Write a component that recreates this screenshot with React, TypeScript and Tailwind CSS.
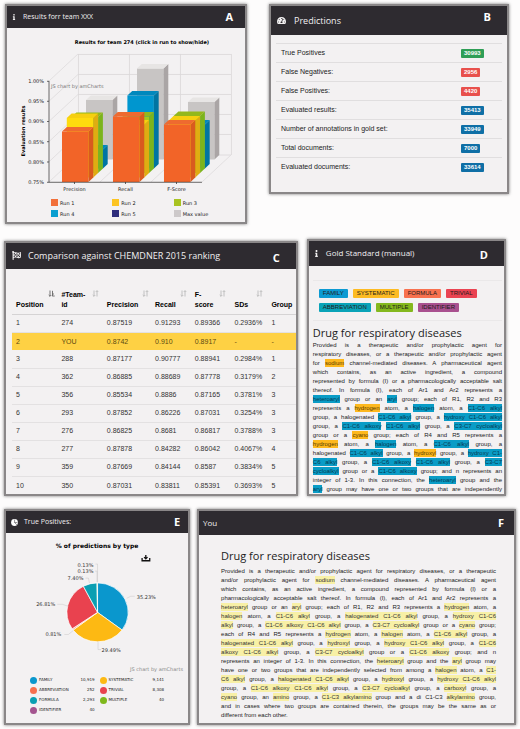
import { useState } from "react";
import type { ReactNode } from "react";
import { FaFlagCheckered, FaInfo, FaTachometerAlt } from "react-icons/fa";

interface PanelProps {
  title: string;
  letter: string;
  icon?: ReactNode;
  className: string;
  headerClass: string;
  letterClass: string;
  children: ReactNode;
}

function Panel({ title, letter, icon, className, headerClass, letterClass, children }: PanelProps) {
  return (
    <section
      className={`min-w-0 border-2 border-[#8a8788] bg-[#f3f1f2] shadow-[0_0_3px_#777] ${className}`}
    >
      <header
        className={`flex items-center bg-[#2e2b30] font-['Open_Sans',sans-serif] text-[#f1eff0] ${headerClass}`}
      >
        {icon}
        <h2 className="flex-1 whitespace-nowrap">{title}</h2>
        <span className={`text-[11px] leading-[14px] font-bold text-white ${letterClass}`}>{letter}</span>
      </header>
      {children}
    </section>
  );
}

/* ---------- A: 3D bar chart ---------- */

const RUNS = [
  { name: "Run 1", face: "#f26428", side: "#d95a1f", cap: "#ee6a30", swatch: "bg-[#f2703a]" },
  { name: "Run 2", face: "#fedb0e", side: "#dfad12", cap: "#f6cf10", swatch: "bg-[#fcc422]" },
  { name: "Run 3", face: "#a5c81c", side: "#7cb41c", cap: "#93b81c", swatch: "bg-[#a9c322]" },
  { name: "Run 4", face: "#0096cf", side: "#0075a2", cap: "#0088bd", swatch: "bg-[#0a9fd0]" },
  { name: "Run 5", face: "#2f2d7c", side: "#232160", cap: "#2a286e", swatch: "bg-[#2f2d7c]" },
  { name: "Max value", face: "#c8c5c4", side: "#aaa5a5", cap: "#e7e5e4", swatch: "bg-[#cdc9ca]" },
];

// top edge of the front face for every run, null = not drawn
const GROUPS: { label: string; x: number; tops: (number | null)[] }[] = [
  { label: "Precision", x: 62, tops: [131.5, 118, 117, 149.5, null, 100] },
  { label: "Recall", x: 113, tops: [116.5, 124.5, 116.5, 95.5, null, 68.5] },
  { label: "F-Score", x: 164, tops: [124.5, 120.5, 116, 124.5, null, 102] },
];

const DX = 4.8;
const DY = 4.5;
const BAR = 26.5;

function Bar({ x, top, depth }: { x: number; top: number; depth: number }) {
  const run = RUNS[depth];
  const left = x + DX * depth;
  const right = left + BAR;
  const base = 182 - DY * depth;
  return (
    <g>
      <path d={`M${left} ${top}H${right}V${base}H${left}Z`} fill={run.face} />
      <path d={`M${right} ${top}l${DX} ${-DY}V${base - DY}L${right} ${base}Z`} fill={run.side} />
      <path d={`M${left} ${top}l${DX} ${-DY}h${BAR}l${-DX} ${DY}Z`} fill={run.cap} />
    </g>
  );
}

function RunsChart() {
  const [hidden, setHidden] = useState<string[]>([]);
  const toggle = (name: string) =>
    setHidden(h => (h.includes(name) ? h.filter(n => n !== name) : [...h, name]));

  return (
    <div className="pt-[10px] pb-1 font-['DejaVu_Sans',sans-serif]">
      <h3 className="pl-8 text-center text-[5px] leading-[8px] font-bold text-black">
        Results for team 274 (click in run to show/hide)
      </h3>
      <svg viewBox="7 50 238 146" className="mt-1 block w-full" role="img" aria-label="Evaluation results">
        <path
          d="M78 54.5H231M78 74.5H231M78 94.5H231M78 114.5H231M78 134.5H231M78 155H231M78.5 54V155M129.5 54V155M180.5 54V155M231.5 54V155"
          stroke="#dad8d9"
          strokeWidth="0.8"
        />
        <path
          d="M49 81L78 54M49 101.2L78 74.5M49 121.4L78 94.5M49 141.6L78 114.5M49 161.8L78 134.5M49 182L78 155M100 182L129 155M151 182L180 155M202 182L231 155"
          stroke="#dddbdc"
          strokeWidth="0.8"
        />
        {GROUPS.map(g => (
          <g key={g.label}>
            {[5, 4, 3, 2, 1, 0].map(i => {
              const top = g.tops[i];
              if (top === null || hidden.includes(RUNS[i].name)) return null;
              return <Bar key={i} x={g.x} top={top} depth={i} />;
            })}
            <path d={`M${g.x + 12.5} 182v2`} stroke="#333" strokeWidth="0.8" />
            <text x={g.x + 12.5} y="191.5" textAnchor="middle" className="fill-[#222] text-[5px]">
              {g.label}
            </text>
          </g>
        ))}
        <path
          d="M49 81V182.3H202M47 81.3h2M47 101.3h2M47 121.5h2M47 141.7h2M47 162h2M47 182.3h2"
          fill="none"
          stroke="#444"
          strokeWidth="0.8"
        />
        {["1.00%", "0.95%", "0.90%", "0.85%", "0.80%", "0.75%"].map((t, i) => (
          <text key={t} x="44" y={83 + i * 20.2} textAnchor="end" className="fill-[#222] text-[5px]">
            {t}
          </text>
        ))}
        <text x="51" y="88" className="fill-[#777] text-[5px]">JS chart by amCharts</text>
        <text
          transform="translate(25 131) rotate(-90)"
          textAnchor="middle"
          className="fill-black text-[5px] font-bold"
        >
          Evaluation results
        </text>
      </svg>
      <div className="grid grid-cols-3 gap-y-[3px] pt-[3px] pr-[10px] pl-11">
        {RUNS.map(r => (
          <button
            key={r.name}
            type="button"
            onClick={() => toggle(r.name)}
            className="flex items-center gap-[2px] text-left text-[5px] leading-[8px] text-[#222]"
          >
            <span className={`h-[7px] w-[7px] ${r.swatch}`} />
            {r.name}
          </button>
        ))}
      </div>
    </div>
  );
}

/* ---------- B: predictions ---------- */

const PREDICTIONS = [
  { label: "True Positives", value: "30993", color: "bg-[#2f9e56]" },
  { label: "False Negatives:", value: "2956", color: "bg-[#e8504c]" },
  { label: "False Positives:", value: "4420", color: "bg-[#e8504c]" },
  { label: "Evaluated results:", value: "35413", color: "bg-[#0f6fa6]" },
  { label: "Number of annotations in gold set:", value: "33949", color: "bg-[#0f6fa6]" },
  { label: "Total documents:", value: "7000", color: "bg-[#0f6fa6]" },
  { label: "Evaluated documents:", value: "33614", color: "bg-[#0f6fa6]" },
];

function Predictions() {
  return (
    <ul className="px-[5px] pt-2 pb-4 font-['Liberation_Sans',sans-serif]">
      {PREDICTIONS.map(p => (
        <li key={p.label} className="flex h-[19px] items-center border-t border-[#e0dedf] pl-[5px]">
          <span className="flex-1 text-[7px] text-[#222]">{p.label}</span>
          <span className="w-[41px]">
            <span
              className={`block w-fit rounded-[1px] px-[3px] text-[6px] leading-[9px] font-bold text-white ${p.color}`}
            >
              {p.value}
            </span>
          </span>
        </li>
      ))}
    </ul>
  );
}

/* ---------- C: ranking table ---------- */

const COLUMNS = [
  { label: "Position", width: "w-[16%]" },
  { label: "#Team-id", width: "w-[16%]" },
  { label: "Precision", width: "w-[17%]" },
  { label: "Recall", width: "w-[14%]" },
  { label: "F-score", width: "w-[14%]" },
  { label: "SDs", width: "w-[13%]" },
  { label: "Group", width: "w-[10%]" },
];

const RANKING = [
  ["1", "274", "0.87519", "0.91293", "0.89366", "0.2936%", "1"],
  ["2", "YOU", "0.8742", "0.910", "0.8917", "-", "-"],
  ["3", "288", "0.87177", "0.90777", "0.88941", "0.2984%", "1"],
  ["4", "362", "0.86885", "0.88689", "0.87778", "0.3179%", "2"],
  ["5", "356", "0.85534", "0.8886", "0.87165", "0.3781%", "3"],
  ["6", "293", "0.87852", "0.86226", "0.87031", "0.3254%", "3"],
  ["7", "276", "0.86825", "0.8681", "0.86817", "0.3788%", "3"],
  ["8", "277", "0.87878", "0.84282", "0.86042", "0.4067%", "4"],
  ["9", "359", "0.87669", "0.84144", "0.8587", "0.3834%", "5"],
  ["10", "350", "0.87031", "0.83811", "0.85391", "0.3693%", "5"],
];

function SortIcon({ active }: { active: boolean }) {
  return (
    <svg
      viewBox="0 0 7 7"
      className={`h-[7px] w-[7px] ${active ? "text-[#666]" : "text-[#bbb]"}`}
      fill="none"
      stroke="currentColor"
      strokeWidth="0.9"
    >
      <path d="M2 0.5V6.3M0.7 5L2 6.3L3.3 5" />
      {active ? <path d="M4.5 0.8V6.2M4.5 6h2.2M4.5 4h1.4" /> : <path d="M5 6.5V0.7M3.7 2L5 0.7L6.3 2" />}
    </svg>
  );
}

function Ranking() {
  return (
    <div className="pt-[21px] pl-[6px] font-['Liberation_Sans',sans-serif] text-[7px] text-[#333]">
      <table className="w-full table-fixed border-collapse">
        <thead>
          <tr className="border-b border-[#d5d3d4]">
            {COLUMNS.map((c, i) => (
              <th key={c.label} className={`h-6 pb-1 pl-1 text-left align-bottom leading-[10px] text-black ${c.width}`}>
                <div className="flex h-5 items-start justify-between gap-1">
                  <span className="self-end">{c.label}</span>
                  {i < 6 && (
                    <span className="pr-1">
                      <SortIcon active={i === 0} />
                    </span>
                  )}
                </div>
              </th>
            ))}
          </tr>
        </thead>
        <tbody>
          {RANKING.map(row => (
            <tr
              key={row[0]}
              className={row[1] === "YOU" ? "bg-[#fed144] text-[#5c4a10]" : "border-b border-[#e3e1e2] last:border-b-0"}
            >
              {row.map((cell, i) => (
                <td key={i} className="h-[18px] pl-1 leading-[8px]">{cell}</td>
              ))}
            </tr>
          ))}
        </tbody>
      </table>
    </div>
  );
}

/* ---------- D / F: annotated text ---------- */

const GOLD_LINES = [
  "Provided is a therapeutic and/or prophylactic agent for",
  "respiratory diseases, or a therapeutic and/or prophylactic agent",
  "for {sodium} channel-mediated diseases. A pharmaceutical agent",
  "which contains, as an active ingredient, a compound",
  "represented by formula (I) or a pharmacologically acceptable salt",
  "thereof. In formula (I), each of Ar1 and Ar2 represents a",
  "[heteroaryl] group or an [aryl] group; each of R1, R2 and R3",
  "represents a {hydrogen} atom, a [halogen] atom, a [C1-C6 alkyl]",
  "group, a halogenated [C1-C6 alkyl] group, a [hydroxy C1-C6 alkyl]",
  "group, a [C1-C6 alkoxy] [C1-C6 alkyl] group, a [C3-C7 cycloalkyl]",
  "group or a {cyano} group; each of R4 and R5 represents a",
  "{hydrogen} atom, a [halogen] atom, a [C1-C6 alkyl] group, a",
  "halogenated [C1-C6 alkyl] group, a {hydroxyl} group, a [hydroxy C1-]",
  "[C6 alkyl] group, a [C1-C6 alkoxy] [C1-C6 alkyl] group, a [C3-C7]",
  "[cycloalkyl] group or a [C1-C6 alkoxy] group; and n represents an",
  "integer of 1-3. In this connection, the [heteroaryl] group and the",
  "[aryl] group may have one or two groups that are independently",
];

const YOUR_LINES = [
  "Provided is a therapeutic and/or prophylactic agent for respiratory diseases, or a therapeutic",
  "and/or prophylactic agent for <sodium> channel-mediated diseases. A pharmaceutical agent",
  "which contains, as an active ingredient, a compound represented by formula (I) or a",
  "pharmacologically acceptable salt thereof. In formula (I), each of Ar1 and Ar2 represents a",
  "<heteroaryl> group or an <aryl> group; each of R1, R2 and R3 represents a <hydrogen> atom, a",
  "<halogen> atom, a <C1-C6 alkyl> group, a <halogenated C1-C6 alkyl> group, a <hydroxy C1-C6>",
  "<alkyl> group, a <C1-C6 alkoxy C1-C6 alkyl> group, a <C3-C7 cycloalkyl> group or a <cyano> group;",
  "each of R4 and R5 represents a <hydrogen> atom, a <halogen> atom, a <C1-C6 alkyl> group, a",
  "<halogenated C1-C6 alkyl> group, a <hydroxyl> group, a <hydroxy C1-C6 alkyl> group, a <C1-C6>",
  "<alkoxy C1-C6 alkyl> group, a <C3-C7 cycloalkyl> group or a <C1-C6 alkoxy> group; and n",
  "represents an integer of 1-3. In this connection, the <heteroaryl> group and the <aryl> group may",
  "have one or two groups that are independently selected from among a <halogen> atom, a <C1->",
  "<C6 alkyl> group, a <halogenated C1-C6 alkyl> group, a <hydroxyl> group, a <hydroxy C1-C6 alkyl>",
  "group, a <C1-C6 alkoxy C1-C6 alkyl> group, a <C3-C7 cycloalkyl> group, a <carboxyl> group, a",
  "<cyano> group, an <amino> group, a <C1-C3 alkylamino> group and a di C1-C3 <alkylamino> group,",
  "and in cases where two groups are contained therein, the groups may be the same as or",
  "different from each other.",
];

// [family]  {systematic}  <predicted>
const MARKS: Record<string, string> = {
  "[": "bg-[#0a9cc6] text-[#063a52]",
  "{": "bg-[#fdb81e] text-[#5a3c00]",
  "<": "bg-[#f8f0a6] text-[#333]",
};

function AnnotatedText({ lines, ragged }: { lines: string[]; ragged?: boolean }) {
  return (
    <p className="font-['Liberation_Sans',sans-serif] text-[6px] leading-[9px] text-[#222]">
      {lines.map((line, i) => (
        <span
          key={i}
          className={`block text-justify ${ragged && i === lines.length - 1 ? "" : "[text-align-last:justify]"}`}
        >
          {line.split(/(\[[^\]]+\]|\{[^}]+\}|<[^>]+>)/).map((part, j) =>
            MARKS[part[0]] ? (
              <mark key={j} className={`py-px ${MARKS[part[0]]}`}>{part.slice(1, -1)}</mark>
            ) : (
              part
            )
          )}
        </span>
      ))}
    </p>
  );
}

const TAGS = [
  { name: "FAMILY", color: "bg-[#0c9ad2]" },
  { name: "SYSTEMATIC", color: "bg-[#fdbb22]" },
  { name: "FORMULA", color: "bg-[#f8714f]" },
  { name: "TRIVIAL", color: "bg-[#ea4352]" },
  { name: "ABBREVIATION", color: "bg-[#0aa3b8]" },
  { name: "MULTIPLE", color: "bg-[#84b81e]" },
  { name: "IDENTIFIER", color: "bg-[#a9508f]" },
];

function GoldStandard() {
  return (
    <div className="pt-[14px] pr-[2px] pl-1">
      <ul className="flex flex-wrap gap-x-[5px] gap-y-[5px] border-y border-[#eae8e9] py-2 pr-4 pl-[6px] font-['Liberation_Sans',sans-serif]">
        {TAGS.map(t => (
          <li key={t.name} className={`rounded-[1px] px-1 text-[6px] leading-[9px] font-medium text-[#221a1a] ${t.color}`}>
            {t.name}
          </li>
        ))}
      </ul>
      <h3 className="pt-[5px] pb-px font-['Open_Sans',sans-serif] text-[11px] leading-[14px] text-[#222]">
        Drug for respiratory diseases
      </h3>
      <AnnotatedText lines={GOLD_LINES} />
    </div>
  );
}

/* ---------- E: pie ---------- */

const TYPES = [
  { name: "FAMILY", count: "10,919", color: "bg-[#0a97cd]" },
  { name: "SYSTEMATIC", count: "9,141", color: "bg-[#fdb913]" },
  { name: "ABBREVIATION", count: "252", color: "bg-[#f7704e]" },
  { name: "TRIVIAL", count: "8,308", color: "bg-[#e9424f]" },
  { name: "FORMULA", count: "2,293", color: "bg-[#0a9fb2]" },
  { name: "MULTIPLE", count: "40", color: "bg-[#7fb81c]" },
  { name: "IDENTIFIER", count: "40", color: "bg-[#a4548f]" },
];

const SLICES = [
  { share: 35.23, fill: "#0a97cd" },
  { share: 29.49, fill: "#fdb913" },
  { share: 0.81, fill: "#f7a08a" },
  { share: 26.81, fill: "#e9424f" },
  { share: 7.4, fill: "#0a9fb2" },
  { share: 0.26, fill: "#7fb81c" },
];

function slicePath(from: number, to: number) {
  const point = (pct: number) => {
    const a = (pct / 100) * Math.PI * 2;
    return `${97 + 30.5 * Math.sin(a)} ${612 - 29.3 * Math.cos(a)}`;
  };
  return `M97 612L${point(from)}A30.5 29.3 0 0 1 ${point(to)}Z`;
}

function PieIcon() {
  return (
    <svg viewBox="0 0 7 7" className="mr-[6px] h-[7px] w-[7px]">
      <circle cx="3.5" cy="3.5" r="3.4" fill="#fff" />
      <path d="M3.6 0.6V3.5L5.9 5.9M3.6 3.5H6.4" fill="none" stroke="#2e2b30" strokeWidth="0.5" />
    </svg>
  );
}

function TypesChart() {
  let sum = 0;
  return (
    <div className="pt-2 pb-[9px] font-['DejaVu_Sans',sans-serif]">
      <h3 className="text-center text-[6px] leading-[10px] font-bold text-black">% of predictions by type</h3>
      <svg viewBox="6 551 181 122" className="block w-full" role="img" aria-label="% of predictions by type">
        <path
          d="M145 555v3.5M143.3 557.1L145 558.8L146.7 557.1M141.3 558v2.7h7.6v-2.7"
          fill="none"
          stroke="#111"
          strokeWidth="1.3"
        />
        {SLICES.map(s => {
          const from = sum;
          sum += s.share;
          return <path key={s.share} d={slicePath(from, sum)} fill={s.fill} stroke="#fff" strokeWidth="0.7" />;
        })}
        <path
          d="M126 598l4-2h4M97.5 641v8h3M73 630l-5 4h-4M68 606l-6-2h-5M89 583l-1-5h-3M96.5 582V571h-2M97 582V564h-2"
          fill="none"
          stroke="#c9c6c7"
          strokeWidth="0.5"
        />
        <g className="fill-[#333] text-[5px]">
          <text x="136" y="598.5">35.23%</text>
          <text x="101" y="651">29.49%</text>
          <text x="61" y="636" textAnchor="end">0.81%</text>
          <text x="55" y="606" textAnchor="end">26.81%</text>
          <text x="83" y="579.5" textAnchor="end">7.40%</text>
          <text x="93" y="573" textAnchor="end">0.13%</text>
          <text x="93" y="567" textAnchor="end">0.13%</text>
        </g>
        <text x="182" y="670.5" textAnchor="end" className="fill-[#888] text-[5px]">JS chart by amCharts</text>
      </svg>
      <ul className="grid grid-cols-2 gap-x-[5px] gap-y-[2px] pt-[2px] pr-6 pl-6 text-[4px] leading-[8px] text-[#222]">
        {TYPES.map(t => (
          <li key={t.name} className="flex items-center gap-[2px]">
            <span className={`h-[7px] w-[7px] rounded-full ${t.color}`} />
            <span className="flex-1">{t.name}</span>
            <span>{t.count}</span>
          </li>
        ))}
      </ul>
    </div>
  );
}

export default function App() {
  return (
    <main className="bg-[#fdfcfc] pt-1 pb-1">
      <div className="flex items-start gap-[22px] pr-[11px] pl-[5px]">
        <Panel
          title="Results forr team XXX"
          letter="A"
          icon={<FaInfo className="mr-[6px] h-[6px] w-[6px]" />}
          className="flex-[242]"
          headerClass="h-[22px] pr-3 pl-1 text-[7px]"
          letterClass=""
        >
          <RunsChart />
        </Panel>
        <Panel
          title="Predictions"
          letter="B"
          icon={<FaTachometerAlt className="mr-2 h-[9px] w-[9px]" />}
          className="flex-[240]"
          headerClass="h-[29px] pr-4 pl-[6px] text-[9px]"
          letterClass="self-start pt-1"
        >
          <Predictions />
        </Panel>
      </div>

      <div className="mt-[15px] flex items-start gap-[9px] pr-[14px] pl-1">
        <Panel
          title="Comparison against CHEMDNER 2015 ranking"
          letter="C"
          icon={<FaFlagCheckered className="mr-[7px] h-[9px] w-[9px]" />}
          className="mt-[2px] flex-[294]"
          headerClass="h-[26px] pr-4 pl-[6px] text-[9px]"
          letterClass="self-end pb-1"
        >
          <Ranking />
        </Panel>
        <Panel
          title="Gold Standard (manual)"
          letter="D"
          icon={<FaInfo className="mr-[6px] h-[7px] w-[7px]" />}
          className="flex-[198]"
          headerClass="h-[25px] pr-4 pl-1 text-[8px]"
          letterClass="self-end pb-1"
        >
          <GoldStandard />
        </Panel>
      </div>

      <div className="mt-[13px] flex gap-[7px] pr-1 pl-1">
        <Panel
          title="True Positives:"
          letter="E"
          icon={<PieIcon />}
          className="flex-[185]"
          headerClass="h-[22px] pr-2 pl-[5px] text-[7px]"
          letterClass=""
        >
          <TypesChart />
        </Panel>
        <Panel
          title="You"
          letter="F"
          className="flex-[320]"
          headerClass="h-[24px] pr-[10px] pl-1 text-[8px]"
          letterClass=""
        >
          <div className="pt-[14px] pr-[18px] pb-[2px] pl-[22px]">
            <h3 className="pb-1 font-['Open_Sans',sans-serif] text-[11px] leading-[14px] text-[#222]">
              Drug for respiratory diseases
            </h3>
            <AnnotatedText lines={YOUR_LINES} ragged />
          </div>
        </Panel>
      </div>
    </main>
  );
}
